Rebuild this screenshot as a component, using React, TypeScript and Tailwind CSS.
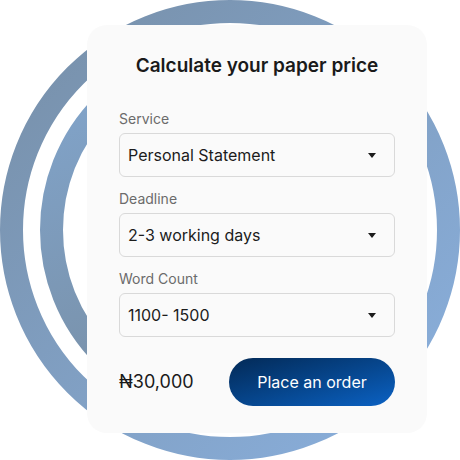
import React from "react";

type Field = { label: string; value: string };

const FIELDS: Field[] = [
  { label: "Service", value: "Personal Statement" },
  { label: "Deadline", value: "2-3 working days" },
  { label: "Word Count", value: "1100- 1500" },
];

// Decorative rings behind the card
function Rings() {
  return (
    <svg
      className="absolute inset-0"
      width="460"
      height="460"
      viewBox="0 0 460 460"
    >
      <defs>
        <linearGradient id="outer" x1="0" y1="0" x2="1" y2="1">
          <stop offset="0" stopColor="#778fa8" />
          <stop offset="1" stopColor="#8ab0de" />
        </linearGradient>
        <linearGradient id="inner" x1="0" y1="0" x2="0.3" y2="1">
          <stop offset="0" stopColor="#82a6ce" />
          <stop offset="1" stopColor="#788fa6" />
        </linearGradient>
      </defs>
      <circle cx="230" cy="230" r="218.5" fill="none" stroke="url(#outer)" strokeWidth="23" />
      <circle cx="230" cy="230" r="178.5" fill="none" stroke="url(#inner)" strokeWidth="23" />
    </svg>
  );
}

function SelectBox({ label, value }: Field) {
  return (
    <div className="flex flex-col">
      <span className="text-sm leading-5 text-[#6b6b6b]">{label}</span>
      <div className="mt-1 h-11 flex items-center justify-between pl-2 pr-[18px] border border-[#d9d9d9] rounded-md bg-[#fafafa]">
        <span className="text-base text-[#1c1c1c]">{value}</span>
        <svg width="8" height="5" viewBox="0 0 8 5">
          <path d="M0 0h8L4 5z" fill="#1c1c1c" />
        </svg>
      </div>
    </div>
  );
}

export default function App() {
  return (
    <div
      className="relative w-[460px] h-[460px] bg-white overflow-hidden"
      style={{ fontFamily: "Inter, 'Noto Sans', sans-serif" }}
    >
      <Rings />
      <div className="relative ml-[87px] mt-[25px] w-[340px] h-[408px] bg-[#fafafa] rounded-[20px] px-8 pt-[27px]">
        <h2 className="text-[19px] leading-7 font-semibold text-[#1a1a1a] text-center">
          Calculate your paper price
        </h2>
        <div className="mt-[29px] flex flex-col gap-3">
          {FIELDS.map((f) => (
            <SelectBox key={f.label} label={f.label} value={f.value} />
          ))}
        </div>
        <div className="mt-[21px] flex items-center justify-between">
          <span className="text-lg text-[#1a1a1a]">₦30,000</span>
          <button className="w-[166px] h-12 rounded-full text-base text-white bg-gradient-to-br from-[#032a57] to-[#0b62c4]">
            Place an order
          </button>
        </div>
      </div>
    </div>
  );
}
